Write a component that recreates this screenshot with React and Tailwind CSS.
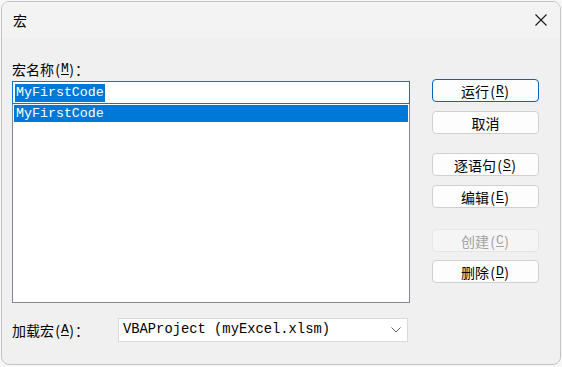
import React from "react";

const cjk = "font-['Microsoft_YaHei','Noto_Sans_CJK_SC',sans-serif]";
const mono = "font-['Liberation_Mono','Noto_Sans_CJK_SC',monospace]";

// hotkey in half-width parens, SimSun style: each glyph in a 7px cell
function Hotkey({ k }) {
  return (
    <span className="inline-flex items-center">
      <span className="inline-block w-[7px] text-center">(</span>
      <span className={`inline-block w-[7px] text-center text-[13px] underline underline-offset-2 ${mono}`}>{k}</span>
      <span className="inline-block w-[7px] text-center">)</span>
    </span>
  );
}

function DialogButton({ label, hotkey, primary = false, disabled = false, className = "" }) {
  return (
    <button
      type="button"
      className={`flex h-[23px] w-[107px] items-center justify-center rounded-[4px] border text-[14px] leading-none ${
        primary ? "border-[#0067c0] bg-[#fdfdfd] text-black" : disabled ? "border-[#e5e5e5] bg-[#f5f5f5] text-[#a2a2a2]" : "border-[#d0d0d0] bg-[#fdfdfd] text-black"
      } ${className}`}
    >
      {label}
      {hotkey && <Hotkey k={hotkey} />}
    </button>
  );
}

export default function App() {
  return (
    <div className={`h-[367px] w-[562px] overflow-hidden bg-[#f7f7f7] ${cjk}`}>
      <div className="ml-px mt-px flex h-[364px] w-[560px] flex-col overflow-hidden rounded-[8px] border border-[#c4c4c4] bg-[#f0f0f0]">
        {/* title bar */}
        <div className="flex h-[36px] shrink-0 items-center justify-between bg-[#f3f3f3] pl-[11px] pr-[12px]">
          <span className="text-[14px] text-black">宏</span>
          <svg width="14" height="14" viewBox="0 0 14 14">
            <path d="M1.5 1.5 L12.5 12.5 M12.5 1.5 L1.5 12.5" stroke="#1a1a1a" strokeWidth="1.1" fill="none" />
          </svg>
        </div>

        {/* body */}
        <div className="flex pl-[10px]">
          <div className="flex w-[398px] flex-col">
            <div className="mt-[23px] flex h-[16px] items-center text-[14px] leading-[16px] text-black">
              宏名称<Hotkey k="M" />：
            </div>
            <div className="mt-[4px] flex h-[23px] items-center border border-[#0078d7] bg-white pl-[2px]">
              <span className={`bg-[#0078d7] px-px text-[13.3px] leading-[18px] text-white ${mono}`}>MyFirstCode</span>
            </div>
            <div className="h-[199px] border border-t-0 border-[#828790] bg-white p-px">
              <div className={`flex h-[17px] items-center bg-[#0078d7] pl-[2px] text-[13.3px] text-white ${mono}`}>MyFirstCode</div>
            </div>
            <div className="mt-[15px] flex items-center">
              <div className="flex w-[106px] items-center text-[14px] text-black">
                加载宏<Hotkey k="A" />：
              </div>
              <div className="flex h-[24px] w-[290px] items-center justify-between border border-[#d9d9d9] bg-white pl-[4px] pr-[6px]">
                <span className={`text-[13.8px] text-black ${mono}`}>VBAProject (myExcel.xlsm)</span>
                <svg width="10" height="6" viewBox="0 0 10 6">
                  <path d="M0.5 0.5 L5 5 L9.5 0.5" stroke="#606060" strokeWidth="1" fill="none" />
                </svg>
              </div>
            </div>
          </div>

          <div className="ml-[22px] flex flex-col pt-[41px]">
            <DialogButton label="运行" hotkey="R" primary />
            <DialogButton label="取消" className="mt-[9px]" />
            <DialogButton label="逐语句" hotkey="S" className="mt-[19px]" />
            <DialogButton label="编辑" hotkey="E" className="mt-[9px]" />
            <DialogButton label="创建" hotkey="C" disabled className="mt-[21px]" />
            <DialogButton label="删除" hotkey="D" className="mt-[8px]" />
          </div>
        </div>
      </div>
    </div>
  );
}
